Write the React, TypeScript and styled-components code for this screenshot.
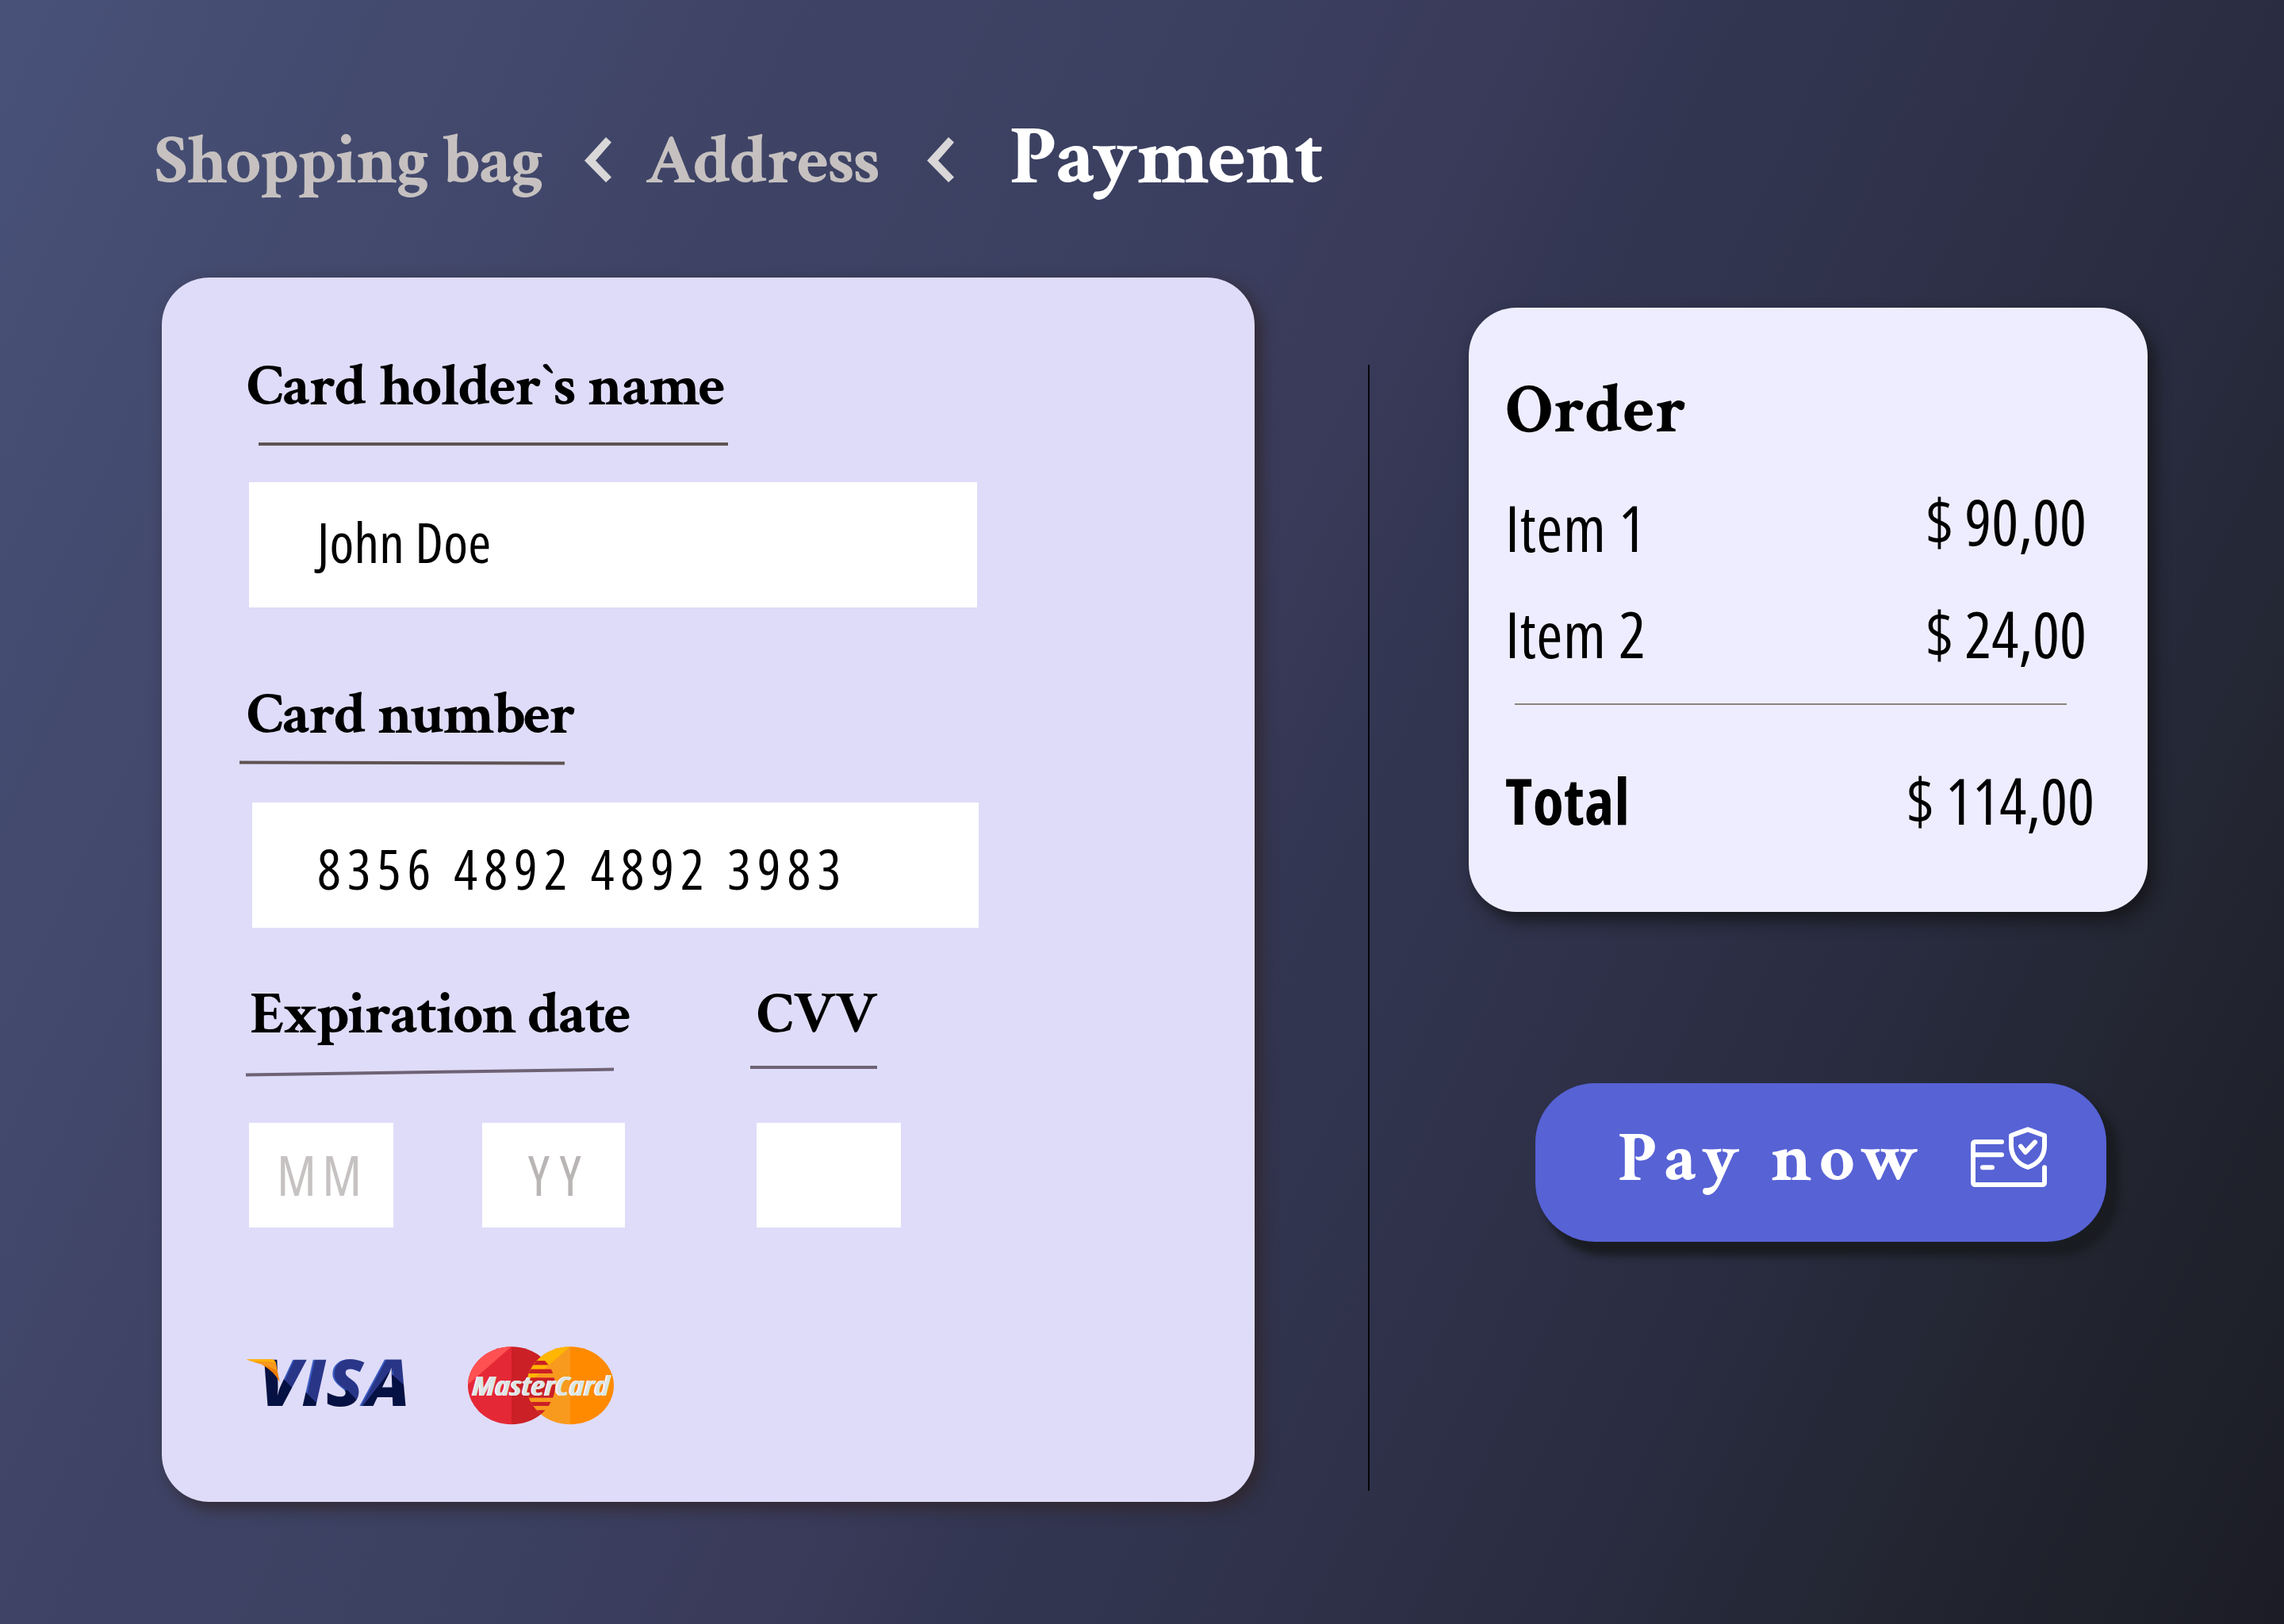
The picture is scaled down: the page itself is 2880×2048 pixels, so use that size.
import React from "react"
import styled, { createGlobalStyle } from 'styled-components'

const serif = `'Crimson Text', 'Liberation Serif', serif`
const sans = `'Open Sans', 'Noto Sans', sans-serif`

const theme = {
    white: '#ffffff',
    black: '#000000',
    panel: '#dfdcf9',
    order: '#eeedff',
    accent: '#5762d5',
    muted: '#c6c1c0',
    chevron: '#d9d7d8',
    rule: '#5e5353',
    ruleSoft: '#6e6275',
}

const GlobalStyle = createGlobalStyle`
    body {
        margin: 0;
    }
    * {
        box-sizing: border-box;
    }
`

const Page = styled.div`
    display: flex;
    flex-direction: column;
    width: 2880px;
    height: 2048px;
    padding: 0 172px 0 204px;
    overflow: hidden;
    background: linear-gradient(115deg, #485178 0%, #3f4466 26%, #3b4060 40%, #3a3b5b 49%, #343753 55%, #2e3149 67%, #292c3f 77%, #22242f 88%, #1b1c26 100%);
`

const Breadcrumbs = styled.nav`
    display: flex;
    align-items: baseline;
    height: 350px;
    padding-top: 145px;
    margin-left: -9px;
    white-space: nowrap;
`

const Crumb = styled.a<{ $active?: boolean; $width: number }>`
    width: ${p => p.$width}px;
    font-family: ${serif};
    font-weight: 700;
    font-size: ${p => p.$active ? 106 : 88}px;
    line-height: 1;
    letter-spacing: ${p => p.$active ? -1 : -1.4}px;
    color: ${p => p.$active ? theme.white : theme.muted};
`

const ChevronIcon = styled.svg<{ $gap: number }>`
    width: 34px;
    height: 57px;
    margin-right: ${p => p.$gap}px;
    margin-bottom: -3px;
    fill: ${theme.chevron};
`

const Content = styled.main`
    display: flex;
    align-items: flex-start;
`

const CardForm = styled.form`
    display: flex;
    flex-direction: column;
    width: 1378px;
    height: 1544px;
    padding: 100px 110px 0;
    border-radius: 60px;
    background: ${theme.panel};
    box-shadow: 8px 8px 20px rgba(48, 36, 42, 0.85);
`

const Field = styled.div<{ $height?: number }>`
    display: flex;
    flex-direction: column;
    height: ${p => p.$height ? `${p.$height}px` : 'auto'};
`

const Label = styled.label<{ $spacing?: number; $left?: number }>`
    margin-left: ${p => p.$left || 0}px;
    font-family: ${serif};
    font-weight: 700;
    font-size: 75px;
    line-height: 1;
    letter-spacing: ${p => p.$spacing || 0}px;
    word-spacing: 3px;
    white-space: nowrap;
    color: ${theme.black};
`

const Underline = styled.div<{ $width: number; $top: number; $left: number; $bottom: number; $tilt?: number; $soft?: boolean }>`
    width: ${p => p.$width}px;
    height: 4px;
    margin: ${p => p.$top}px 0 ${p => p.$bottom}px ${p => p.$left}px;
    background: ${p => p.$soft ? theme.ruleSoft : theme.rule};
    transform: skewY(${p => p.$tilt || 0}deg);
`

const Input = styled.div<{ $digits?: boolean }>`
    display: flex;
    align-items: center;
    width: ${p => p.$digits ? 916 : 918}px;
    height: 158px;
    margin-left: ${p => p.$digits ? 4 : 0}px;
    padding: ${p => p.$digits ? '8px 0 0 82px' : '0 0 8px 86px'};
    background: ${theme.white};
    font-family: ${sans};
    font-stretch: 75%;
    font-size: 70px;
    line-height: 1;
    letter-spacing: ${p => p.$digits ? 8.05 : 0.2}px;
    white-space: nowrap;
`

const FieldRow = styled.div`
    display: grid;
    grid-template-columns: 640px 1fr;
    align-items: start;
    margin-top: -1px;
`

const SmallInputs = styled.div`
    display: flex;
    gap: 112px;
`

const SmallInput = styled.div<{ $width?: number; $pad?: number; $spacing?: number; $color?: string }>`
    display: flex;
    align-items: center;
    width: ${p => p.$width || 182}px;
    height: 132px;
    padding: 0 0 2px ${p => p.$pad || 0}px;
    background: ${theme.white};
    color: ${p => p.$color || theme.black};
    font-family: ${sans};
    font-stretch: 75%;
    font-size: 70px;
    line-height: 1;
    letter-spacing: ${p => p.$spacing || 0}px;
`

const CardLogos = styled.div`
    display: flex;
    align-items: flex-start;
    gap: 75px;
    margin-top: 150px;
    margin-left: -4px;
`

const VisaLogo = styled.svg`
    width: 205px;
    height: 65px;
    margin-top: 13px;
    overflow: visible;
`

const MasterCardLogo = styled.svg`
    width: 184px;
    height: 99px;
    overflow: visible;
`

const LogoText = styled.text<{ $narrow?: boolean }>`
    font-family: ${sans};
    font-stretch: ${p => p.$narrow ? 82 : 100}%;
    font-weight: ${p => p.$narrow ? 700 : 800};
    font-style: italic;
`

const Divider = styled.div`
    width: 2px;
    height: 1420px;
    margin: 110px 125px 0 143px;
    background: #05050a;
`

const Aside = styled.aside`
    display: flex;
    flex-direction: column;
    width: 856px;
    margin-top: 38px;
`

const OrderCard = styled.section`
    height: 762px;
    padding: 86px 70px 0 46px;
    border-radius: 60px;
    background: ${theme.order};
    box-shadow: 8px 11px 20px rgba(20, 20, 24, 0.85);
`

const OrderTitle = styled.h2`
    margin: 0 0 63px;
    font-family: ${serif};
    font-weight: 700;
    font-size: 88px;
    line-height: 1;
    letter-spacing: 0.3px;
`

const OrderRow = styled.div<{ $bottom?: number; $total?: boolean }>`
    display: flex;
    justify-content: space-between;
    margin-right: ${p => p.$total ? -3 : 7}px;
    margin-bottom: ${p => p.$bottom || 0}px;
    font-family: ${sans};
    font-stretch: 75%;
    font-size: 80px;
    line-height: 1;
    white-space: nowrap;
`

const ItemName = styled.span`
    letter-spacing: 0.6px;
`

const Price = styled.span<{ $raise?: number }>`
    margin-top: ${p => -(p.$raise || 0)}px;
`

const Total = styled.span`
    font-weight: 700;
    letter-spacing: 0.4px;
`

const OrderLine = styled.div`
    width: 696px;
    height: 2px;
    margin: 0 0 80px 12px;
    background: #8a8380;
`

const PayButton = styled.button`
    display: flex;
    align-items: center;
    width: 720px;
    height: 200px;
    margin: 216px 0 0 84px;
    padding: 0 0 9px 104px;
    border: none;
    border-radius: 75px;
    background: ${theme.accent};
    box-shadow: 13px 15px 10px 3px rgba(25, 27, 33, 0.95);
    color: ${theme.white};
    font-family: ${serif};
    font-weight: 700;
    font-size: 88px;
    line-height: 1;
    letter-spacing: 9px;
    word-spacing: 4px;
    cursor: pointer;
`

const PayText = styled.span`
    width: 444px;
    text-align: left;
    white-space: nowrap;
`

const SecureIcon = styled.svg`
    width: 98px;
    height: 78px;
    margin-bottom: 5px;
    fill: none;
    stroke: ${theme.white};
    stroke-width: 18;
    stroke-linecap: round;
    stroke-linejoin: round;
`

const Chevron: React.FC<{ gap: number }> = ({ gap }) => (
    <ChevronIcon $gap={gap} viewBox="0 0 34 57">
        <polygon points="27,0 34,6.5 14,29.5 34,50.5 27,57 0,29.5" />
    </ChevronIcon>
)

const Visa: React.FC = () => (
    <VisaLogo viewBox="60 95 615 195">
        <clipPath id="visa">
            <LogoText x="110" y="281" fontSize="246" textLength="572" lengthAdjust="spacingAndGlyphs">VISA</LogoText>
        </clipPath>
        <g clipPath="url(#visa)">
            <rect x="60" y="90" width="620" height="200" fill="#3c5fc4" />
            <LogoText x="118" y="282" fontSize="246" textLength="572" lengthAdjust="spacingAndGlyphs" fill="#293688" stroke="#293688" strokeWidth="3">VISA</LogoText>
            <polygon points="100,90 192,90 196,172 262,240 240,290 100,290" fill="#041142" />
            <polygon points="284,226 348,290 270,290" fill="#041142" />
            <polygon points="352,225 445,222 492,272 480,290 350,290" fill="#041142" />
            <polygon points="602,152 680,222 690,290 496,290" fill="#041142" />
        </g>
        <path d="M62 105 H158 Q171 106 174 120 L188 190 Q168 150 124 126 Q98 118 62 105 Z" fill="#f8981d" />
        <path d="M62 105 H158 Q171 106 174 124 Q168 113 150 113 H88 Z" fill="#ffb400" />
        <path d="M120 124 Q150 132 178 148 L188 190 Q168 150 120 124 Z" fill="#ef7d00" />
    </VisaLogo>
)

const MasterCard: React.FC = () => (
    <MasterCardLogo viewBox="900 53 552 297">
        <clipPath id="left"><ellipse cx="1065" cy="201" rx="165" ry="147" /></clipPath>
        <clipPath id="right"><ellipse cx="1287" cy="201" rx="165" ry="147" /></clipPath>
        <g clipPath="url(#left)">
            <rect x="900" y="50" width="165" height="300" fill="#e52836" />
            <rect x="1065" y="50" width="170" height="300" fill="#cb2026" />
            <polygon points="1065,53 900,197 900,53" fill="#ff5151" />
        </g>
        <g clipPath="url(#right)">
            <rect x="1120" y="50" width="167" height="300" fill="#f89a1e" />
            <rect x="1287" y="50" width="170" height="300" fill="#ff8a00" />
            <polygon points="1287,53 1122,197 1122,53" fill="#ffb600" />
            <g clipPath="url(#left)" fill="#cb2026">
                <rect x="1120" y="107" width="115" height="16" />
                <rect x="1120" y="139" width="115" height="16" />
                <rect x="1120" y="171" width="115" height="76" />
                <rect x="1120" y="263" width="115" height="15" />
                <rect x="1120" y="294" width="115" height="20" />
            </g>
        </g>
        <LogoText $narrow x="914" y="238" fontSize="102" textLength="518" lengthAdjust="spacingAndGlyphs" fill="#ffffff" aria-hidden>MasterCard</LogoText>
        <LogoText $narrow x="918" y="240" fontSize="102" textLength="518" lengthAdjust="spacingAndGlyphs" fill="#dce5e6">MasterCard</LogoText>
    </MasterCardLogo>
)

const Secure: React.FC = () => (
    <SecureIcon viewBox="105 60 294 234">
        <path d="M225 120H126Q117 120 117 129V273Q117 282 126 282H378Q387 282 387 273V217" />
        <path d="M117 169H225M153 217H189" />
        <path d="M324 73L387 96V135C387 175 362 204 324 216C286 204 261 175 261 135V96Z" />
        <path d="M297 137L315 159L351 121" />
    </SecureIcon>
)

const Order: React.FC = () => (
    <OrderCard>
        <OrderTitle>Order</OrderTitle>
        <OrderRow $bottom={54}>
            <ItemName>Item 1</ItemName>
            <Price $raise={8}>$ 90,00</Price>
        </OrderRow>
        <OrderRow $bottom={48}>
            <ItemName>Item 2</ItemName>
            <Price>$ 24,00</Price>
        </OrderRow>
        <OrderLine />
        <OrderRow $total>
            <Total>Total</Total>
            <Price>$ 114,00</Price>
        </OrderRow>
    </OrderCard>
)

export default function App() {
    return (
        <Page>
            <GlobalStyle />
            <Breadcrumbs>
                <Crumb $width={542}>Shopping bag</Crumb>
                <Chevron gap={43} />
                <Crumb $width={355}>Address</Crumb>
                <Chevron gap={70} />
                <Crumb $active $width={400}>Payment</Crumb>
            </Breadcrumbs>
            <Content>
                <CardForm>
                    <Field $height={414}>
                        <Label $spacing={-1.75} $left={-3}>Card holder`s name</Label>
                        <Underline $width={592} $top={33} $left={12} $bottom={46} />
                        <Input>John Doe</Input>
                    </Field>
                    <Field $height={379}>
                        <Label $spacing={-2} $left={-3}>Card number</Label>
                        <Underline $width={410} $top={21} $left={-12} $bottom={48} $tilt={0.17} />
                        <Input $digits>8356 4892 4892 3983</Input>
                    </Field>
                    <FieldRow>
                        <Field>
                            <Label $spacing={-2.2} $left={1}>Expiration date</Label>
                            <Underline $soft $width={464} $top={33} $left={-4} $bottom={62} $tilt={-0.86} />
                            <SmallInputs>
                                <SmallInput $pad={35} $spacing={7.5} $color="#c6c2c2">MM</SmallInput>
                                <SmallInput $width={180} $pad={58} $spacing={13} $color="#b9b5b5">YY</SmallInput>
                            </SmallInputs>
                        </Field>
                        <Field>
                            <Label $spacing={-0.5}>CVV</Label>
                            <Underline $soft $width={160} $top={27} $left={-8} $bottom={68} />
                            <SmallInput />
                        </Field>
                    </FieldRow>
                    <CardLogos>
                        <Visa />
                        <MasterCard />
                    </CardLogos>
                </CardForm>
                <Divider />
                <Aside>
                    <Order />
                    <PayButton type="button">
                        <PayText>Pay now</PayText>
                        <Secure />
                    </PayButton>
                </Aside>
            </Content>
        </Page>
    )
}
